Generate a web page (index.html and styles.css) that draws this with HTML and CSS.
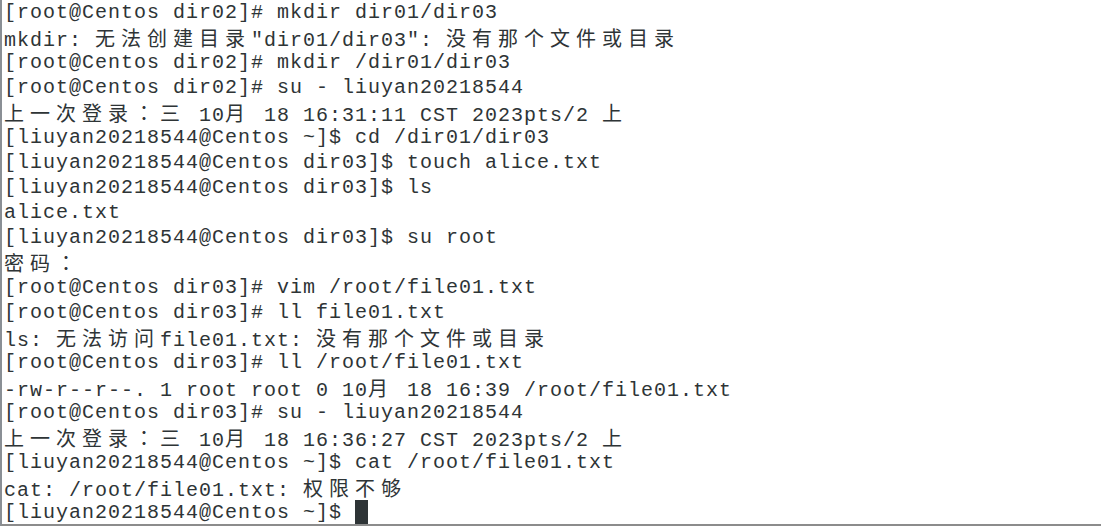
FILE: index.html
```html
<!DOCTYPE html>
<html lang="zh-CN">
<head>
<meta charset="utf-8">
<title>Terminal</title>
<link rel="stylesheet" href="styles.css">
</head>
<body>
<div class="term">
<div class="line">[root@Centos dir02]# mkdir dir01/dir03</div>
<div class="line">mkdir: <span class="cj">无法创建目录</span>"dir01/dir03": <span class="cj">没有那个文件或目录</span></div>
<div class="line">[root@Centos dir02]# mkdir /dir01/dir03</div>
<div class="line">[root@Centos dir02]# su - liuyan20218544</div>
<div class="line"><span class="cj">上一次登录<span class="fc" lang="zh-TW">：</span>三</span> 10<span class="cj">月</span> 18 16:31:11 CST 2023pts/2 <span class="cj">上</span></div>
<div class="line">[liuyan20218544@Centos ~]$ cd /dir01/dir03</div>
<div class="line">[liuyan20218544@Centos dir03]$ touch alice.txt</div>
<div class="line">[liuyan20218544@Centos dir03]$ ls</div>
<div class="line">alice.txt</div>
<div class="line">[liuyan20218544@Centos dir03]$ su root</div>
<div class="line"><span class="cj">密码<span class="fc" lang="zh-TW">：</span></span></div>
<div class="line">[root@Centos dir03]# vim /root/file01.txt</div>
<div class="line">[root@Centos dir03]# ll file01.txt</div>
<div class="line">ls: <span class="cj">无法访问</span>file01.txt: <span class="cj">没有那个文件或目录</span></div>
<div class="line">[root@Centos dir03]# ll /root/file01.txt</div>
<div class="line">-rw-r--r--. 1 root root 0 10<span class="cj">月</span> 18 16:39 /root/file01.txt</div>
<div class="line">[root@Centos dir03]# su - liuyan20218544</div>
<div class="line"><span class="cj">上一次登录<span class="fc" lang="zh-TW">：</span>三</span> 10<span class="cj">月</span> 18 16:36:27 CST 2023pts/2 <span class="cj">上</span></div>
<div class="line">[liuyan20218544@Centos ~]$ cat /root/file01.txt</div>
<div class="line">cat: /root/file01.txt: <span class="cj">权限不够</span></div>
<div class="line">[liuyan20218544@Centos ~]$ <span class="cursor"></span></div>
</div>
</body>
</html>
```
FILE: styles.css
```css
html, body {
  margin: 0;
  padding: 0;
  background: #ffffff;
}
.term {
  box-sizing: border-box;
  width: 1101px;
  height: 526px;
  border-left: 2px solid #8a8f95;
  border-bottom: 2px solid #8c8c8c;
  padding-left: 2px;
  font-family: "Liberation Mono", "Noto Sans CJK SC", monospace;
  font-size: 20px;
  letter-spacing: 1px;
  color: #2e3436;
  overflow: hidden;
}
.line {
  height: 25px;
  line-height: 25px;
  white-space: pre;
}
.cj {
  font-family: "Noto Sans CJK SC", sans-serif;
  letter-spacing: 6px;
  line-height: 25px;
}
.fc {
  font-family: "Noto Sans CJK TC", sans-serif;
}
.cursor {
  display: inline-block;
  width: 13px;
  height: 24px;
  background: #2e3436;
  vertical-align: top;
}
```
